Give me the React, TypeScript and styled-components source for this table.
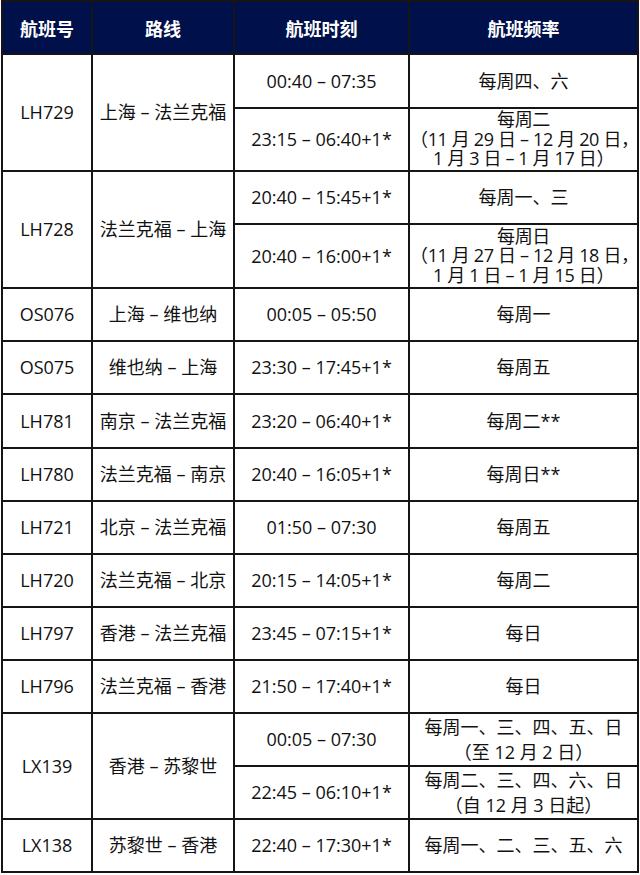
import React from 'react'
import styled, { createGlobalStyle } from 'styled-components'

const GlobalStyle = createGlobalStyle`
  html, body {
    margin: 0;
    padding: 0;
    background: #ffffff;
  }
  body {
    font-family: 'Open Sans', 'Noto Sans CJK SC', sans-serif;
    color: #111111;
  }
`

const StyledPage = styled.div`
  padding: 0 0 0 1px;
`

const StyledTable = styled.table`
  width: 636px;
  border-collapse: collapse;
  table-layout: fixed;
  font-size: 18px;
  border: 2px solid #151515;
`

const StyledHeadCell = styled.th`
  padding: 0;
  background: #00104a;
  color: #ffffff;
  font-family: 'Noto Sans CJK SC', sans-serif;
  font-weight: 700;
  font-size: 18px;
  text-align: center;
  vertical-align: middle;
  border: 2px solid #151515;
`

const StyledRow = styled.tr<{ $height: number }>`
  height: ${({ $height }) => $height}px;
`

const StyledCell = styled.td<{ $tight?: boolean }>`
  padding: 0;
  text-align: center;
  vertical-align: middle;
  border: 2px solid #151515;
  line-height: ${({ $tight }) => ($tight ? '19.5px' : '25px')};
  letter-spacing: ${({ $tight }) => ($tight ? '-0.35px' : '0')};
  white-space: nowrap;
  overflow: visible;
`

const StyledLine = styled.div`
  display: block;
`

interface Leg {
  time: string
  days: string[]
  height: number
}

interface Flight {
  code: string
  route: string
  legs: Leg[]
}

const flights: Flight[] = [
  {
    code: 'LH729',
    route: '上海 – 法兰克福',
    legs: [
      { time: '00:40 – 07:35', days: ['每周四、六'], height: 54 },
      {
        time: '23:15 – 06:40+1*',
        days: ['每周二', '（11 月 29 日 – 12 月 20 日，', '1 月 3 日 – 1 月 17 日）'],
        height: 63,
      },
    ],
  },
  {
    code: 'LH728',
    route: '法兰克福 – 上海',
    legs: [
      { time: '20:40 – 15:45+1*', days: ['每周一、三'], height: 53 },
      {
        time: '20:40 – 16:00+1*',
        days: ['每周日', '（11 月 27 日 – 12 月 18 日，', '1 月 1 日 – 1 月 15 日）'],
        height: 64,
      },
    ],
  },
  { code: 'OS076', route: '上海 – 维也纳', legs: [{ time: '00:05 – 05:50', days: ['每周一'], height: 53 }] },
  { code: 'OS075', route: '维也纳 – 上海', legs: [{ time: '23:30 – 17:45+1*', days: ['每周五'], height: 53 }] },
  { code: 'LH781', route: '南京 – 法兰克福', legs: [{ time: '23:20 – 06:40+1*', days: ['每周二**'], height: 54 }] },
  { code: 'LH780', route: '法兰克福 – 南京', legs: [{ time: '20:40 – 16:05+1*', days: ['每周日**'], height: 53 }] },
  { code: 'LH721', route: '北京 – 法兰克福', legs: [{ time: '01:50 – 07:30', days: ['每周五'], height: 53 }] },
  { code: 'LH720', route: '法兰克福 – 北京', legs: [{ time: '20:15 – 14:05+1*', days: ['每周二'], height: 53 }] },
  { code: 'LH797', route: '香港 – 法兰克福', legs: [{ time: '23:45 – 07:15+1*', days: ['每日'], height: 53 }] },
  { code: 'LH796', route: '法兰克福 – 香港', legs: [{ time: '21:50 – 17:40+1*', days: ['每日'], height: 53 }] },
  {
    code: 'LX139',
    route: '香港 – 苏黎世',
    legs: [
      { time: '00:05 – 07:30', days: ['每周一、三、四、五、日', '（至 12 月 2 日）'], height: 53 },
      { time: '22:45 – 06:10+1*', days: ['每周二、三、四、六、日', '（自 12 月 3 日起）'], height: 53 },
    ],
  },
  { code: 'LX138', route: '苏黎世 – 香港', legs: [{ time: '22:40 – 17:30+1*', days: ['每周一、二、三、五、六'], height: 53 }] },
]

const DaysCell = ({ days }: { days: string[] }) => (
  <StyledCell $tight={days.length > 2}>
    {days.map((line) => (
      <StyledLine key={line}>{line}</StyledLine>
    ))}
  </StyledCell>
)

const FlightRows = ({ flight }: { flight: Flight }) => {
  const { code, route, legs } = flight
  const span = legs.length

  return (
    <>
      {legs.map((leg, index) => (
        <StyledRow key={leg.time} $height={leg.height}>
          {index === 0 && <StyledCell rowSpan={span}>{code}</StyledCell>}
          {index === 0 && <StyledCell rowSpan={span}>{route}</StyledCell>}
          <StyledCell>{leg.time}</StyledCell>
          <DaysCell days={leg.days} />
        </StyledRow>
      ))}
    </>
  )
}

const App = () => (
  <StyledPage>
    <GlobalStyle />
    <StyledTable>
      <colgroup>
        <col style={{ width: 90 }} />
        <col style={{ width: 142 }} />
        <col style={{ width: 175 }} />
        <col style={{ width: 229 }} />
      </colgroup>
      <thead>
        <StyledRow $height={53}>
          <StyledHeadCell>航班号</StyledHeadCell>
          <StyledHeadCell>路线</StyledHeadCell>
          <StyledHeadCell>航班时刻</StyledHeadCell>
          <StyledHeadCell>航班频率</StyledHeadCell>
        </StyledRow>
      </thead>
      <tbody>
        {flights.map((flight) => (
          <FlightRows key={flight.code} flight={flight} />
        ))}
      </tbody>
    </StyledTable>
  </StyledPage>
)

export default App
